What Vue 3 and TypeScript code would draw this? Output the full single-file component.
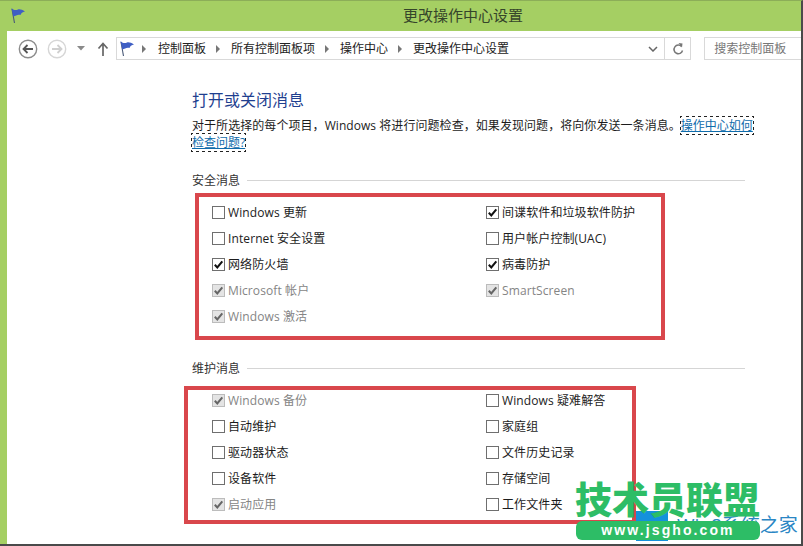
<script setup lang="ts">
interface Item { label: string; checked?: boolean; disabled?: boolean }
interface Section { title: string; left: Item[]; right: Item[] }
const crumbs = ['控制面板', '所有控制面板项', '操作中心', '更改操作中心设置']
const sections: Section[] = [
  {
    title: '安全消息',
    left: [
      { label: 'Windows 更新' },
      { label: 'Internet 安全设置' },
      { label: '网络防火墙', checked: true },
      { label: 'Microsoft 帐户', checked: true, disabled: true },
      { label: 'Windows 激活', checked: true, disabled: true },
    ],
    right: [
      { label: '间谍软件和垃圾软件防护', checked: true },
      { label: '用户帐户控制(UAC)' },
      { label: '病毒防护', checked: true },
      { label: 'SmartScreen', checked: true, disabled: true },
    ],
  },
  {
    title: '维护消息',
    left: [
      { label: 'Windows 备份', checked: true, disabled: true },
      { label: '自动维护' },
      { label: '驱动器状态' },
      { label: '设备软件' },
      { label: '启动应用', checked: true, disabled: true },
    ],
    right: [
      { label: 'Windows 疑难解答' },
      { label: '家庭组' },
      { label: '文件历史记录' },
      { label: '存储空间' },
      { label: '工作文件夹' },
    ],
  },
]
</script>

<template>
  <div class="window">
    <header class="titlebar">
      <svg class="flag title-flag" viewBox="0 0 16 16" width="16" height="16">
        <path d="M2 2 L4.500 16" stroke="#4a5a78" stroke-width="1.100" fill="none" />
        <path d="M1.500 1 C4 3.500 6 3.500 8 2.500 C10 2 12.500 3 15 4.500 C12.500 5 11 6 10.500 8 C8 7 6 8.500 3.300 9.500 Z" fill="#3f5fc4" />
      </svg>
      <span>更改操作中心设置</span>
    </header>
    <div class="client">
      <div class="toolbar">
        <div class="nav">
          <svg viewBox="0 0 20 20" width="20" height="20">
            <circle cx="10" cy="10" r="8.700" fill="#fff" stroke="#8c8c8c" stroke-width="1.400" />
            <path d="M15 10H6M9.500 6L5.500 10L9.500 14" fill="none" stroke="#555" stroke-width="1.800" />
          </svg>
          <svg viewBox="0 0 20 20" width="20" height="20">
            <circle cx="10" cy="10" r="8.700" fill="#fff" stroke="#d6d6d6" stroke-width="1.400" />
            <path d="M5 10H14M10.500 6L14.500 10L10.500 14" fill="none" stroke="#cfcfcf" stroke-width="1.800" />
          </svg>
          <svg class="drop" viewBox="0 0 8 5" width="8" height="5"><path d="M0 0H8L4 4.500Z" fill="#8a8a8a" /></svg>
          <svg class="up" viewBox="0 0 12 14" width="12" height="14">
            <path d="M6 14V2M1.500 6.500L6 1.500L10.500 6.500" fill="none" stroke="#666" stroke-width="1.700" />
          </svg>
        </div>
        <div class="address">
          <svg class="flag" viewBox="0 0 16 16" width="16" height="16">
            <path d="M2 2 L4.500 16" stroke="#4a5a78" stroke-width="1.100" fill="none" />
            <path d="M1.500 1 C4 3.500 6 3.500 8 2.500 C10 2 12.500 3 15 4.500 C12.500 5 11 6 10.500 8 C8 7 6 8.500 3.300 9.500 Z" fill="#3f5fc4" />
          </svg>
          <template v-for="c in crumbs" :key="c">
            <i class="sep"></i>
            <span class="crumb">{{ c }}</span>
          </template>
          <span class="spacer"></span>
          <svg class="chev" viewBox="0 0 10 6" width="10" height="6">
            <path d="M1 1L5 5L9 1" fill="none" stroke="#666" stroke-width="1.500" />
          </svg>
          <span class="refresh">
            <svg viewBox="0 0 12 14" width="12" height="14">
              <path d="M9.500 4.500A4.300 4.300 0 1 0 10.500 8.500" fill="none" stroke="#777" stroke-width="1.500" />
              <path d="M6.500 1L10.500 1.500L10 5.500Z" fill="#777" />
            </svg>
          </span>
        </div>
        <div class="search">搜索控制面板</div>
      </div>

      <main class="content">
        <h1>打开或关闭消息</h1>
        <p class="intro">对于所选择的每个项目，Windows 将进行问题检查，如果发现问题，将向你发送一条消息。<a class="link">操作中心如何<br />检查问题?</a></p>
        <section v-for="(s, si) in sections" :key="s.title" class="group" :class="'group' + si">
          <div class="legend"><span>{{ s.title }}</span><i></i></div>
          <div class="columns">
            <div v-for="(col, ci) in [s.left, s.right]" :key="ci" class="col">
              <label v-for="it in col" :key="it.label" class="row" :class="{ off: it.disabled }">
                <span class="box">
                  <svg v-if="it.checked" viewBox="0 0 13 13" width="13" height="13">
                    <path d="M2.800 6.800L5.300 9.500L10.300 3.300" fill="none" :stroke="it.disabled ? '#666' : '#111'" stroke-width="2" />
                  </svg>
                </span>
                <span>{{ it.label }}</span>
              </label>
            </div>
          </div>
        </section>
      </main>
    </div>

    <div class="redbox red1"></div>
    <div class="redbox red2"></div>

    <div class="mark">
      <div class="winlogo"></div>
      <div class="win8">Win8系统之家</div>
      <div class="mark-title">技术员联盟</div>
      <div class="pill">www.jsgho.com</div>
    </div>
  </div>
</template>

<style>
html, body { margin: 0; padding: 0; overflow: hidden; }
</style>

<style scoped>
.window {
  position: relative;
  box-sizing: border-box;
  width: 803px;
  height: 546px;
  overflow: hidden;
  display: flex;
  flex-direction: column;
  background: #a5cf63;
  border-top: 1px solid #8cae58;
  border-right: 2px solid #4a4a4a;
  border-bottom: 2px solid #4a4a4a;
  font-family: "Open Sans", "Noto Sans CJK SC", sans-serif;
  font-size: 12px;
  color: #1c1c1c;
}
.titlebar {
  position: relative;
  box-sizing: border-box;
  flex: none;
  height: 30px;
  display: flex;
  align-items: center;
  padding: 0 0 3px 403px;
  font-size: 15px;
  color: #35452a;
}
.title-flag { position: absolute; left: 10px; top: 6px; }
.client {
  flex: 1;
  margin-left: 7px;
  background: #fff;
  display: flex;
  flex-direction: column;
  min-height: 0;
}
.toolbar {
  flex: none;
  display: flex;
  align-items: center;
  margin-top: 6px;
  height: 23px;
}
.nav {
  width: 109px;
  display: flex;
  align-items: center;
  box-sizing: border-box;
  padding-left: 11px;
}
.nav svg + svg { margin-left: 9px; }
.nav .drop { margin-left: 10px; }
.nav .up { margin-left: 12px; }
.address {
  box-sizing: border-box;
  width: 576px;
  height: 23px;
  border: 1px solid #d9d9d9;
  display: flex;
  align-items: center;
  padding-left: 2px;
  color: #222;
}
.address .flag { margin-top: -1px; }
.sep {
  width: 0;
  height: 0;
  border-left: 4px solid #777;
  border-top: 4px solid transparent;
  border-bottom: 4px solid transparent;
  margin: 0 10.500px;
}
.flag + .sep { margin: 0 12px 0 7px; }
.crumb { line-height: 21px; }
.spacer { flex: 1; }
.chev { margin-right: 6px; }
.refresh {
  width: 25px;
  height: 21px;
  border-left: 1px solid #d9d9d9;
  display: flex;
  align-items: center;
  justify-content: center;
}
.search {
  box-sizing: border-box;
  width: 97px;
  height: 23px;
  margin-left: 13px;
  border: 1px solid #d9d9d9;
  border-right: none;
  padding-left: 9px;
  line-height: 21px;
  color: #777;
}
.content {
  box-sizing: border-box;
  width: 738px;
  padding: 29px 0 0 185px;
}
h1 {
  margin: 0;
  font-size: 16px;
  line-height: 22px;
  font-weight: 400;
  color: #1f3f8f;
}
.intro {
  margin: 6px 0 0;
  width: 562px;
  line-height: 17px;
  white-space: nowrap;
  letter-spacing: 0.06px;
}
.link {
  color: #0f6cab;
  letter-spacing: 0;
  text-decoration: underline;
  outline: 1px dotted #222;
  outline-offset: 0;
}
.group0 { margin-top: 20px; }
.group1 { margin-top: 30px; }
.legend {
  display: flex;
  align-items: center;
  height: 18px;
  color: #333;
}
.legend i {
  flex: 1;
  height: 1px;
  margin-left: 7px;
  background: #d5d5d5;
}
.columns {
  display: grid;
  grid-template-columns: 274px 1fr;
  margin-top: 10px;
  padding-left: 20px;
}
.row {
  display: flex;
  align-items: center;
  height: 26px;
  letter-spacing: 0.1px;
}
.row.off { color: #858585; }
.box {
  box-sizing: border-box;
  flex: none;
  width: 13px;
  height: 13px;
  margin-right: 3px;
  margin-top: 1px;
  border: 1px solid #6f6f6f;
  background: #fff;
  position: relative;
}
.box svg { position: absolute; left: -1px; top: -1px; }
.off .box { background: #e4e4e4; border-color: #bcbcbc; }
.redbox {
  position: absolute;
  box-sizing: border-box;
  border: 4px solid #d9474c;
}
.red1 { left: 195px; top: 192px; width: 470px; height: 147px; }
.red2 { left: 184px; top: 385px; width: 452px; height: 138px; }
.mark { position: absolute; left: 0; top: 0; width: 0; height: 0; }
.winlogo {
  position: absolute;
  left: 636px;
  top: 510px;
  width: 32px;
  height: 30px;
  background: #1591dc;
}
.win8 {
  position: absolute;
  left: 677px;
  top: 512px;
  font-size: 19px;
  line-height: 24px;
  white-space: nowrap;
  color: #2a86c4;
}
.mark-title {
  position: absolute;
  left: 575px;
  top: 478px;
  width: 186px;
  font-size: 37px;
  line-height: 42px;
  font-weight: 900;
  white-space: nowrap;
  color: #2dbd66;
}
.pill {
  position: absolute;
  left: 576px;
  top: 520px;
  width: 184px;
  height: 19px;
  box-sizing: border-box;
  border-radius: 6px;
  background: #2dbd66;
  color: #fff;
  font-family: "Liberation Sans", sans-serif;
  font-weight: 700;
  font-size: 14px;
  line-height: 19px;
  letter-spacing: 2.100px;
  text-align: center;
}
</style>
